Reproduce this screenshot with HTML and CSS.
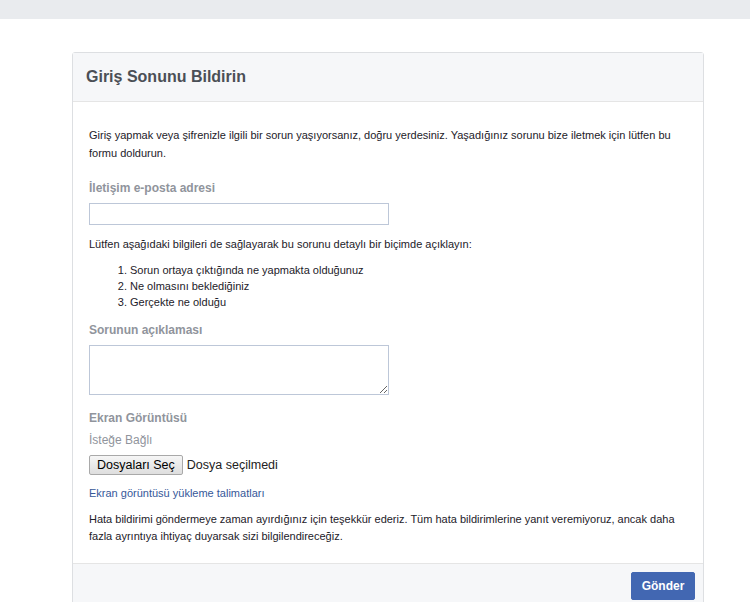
FILE: index.html
```html
<!DOCTYPE html>
<html lang="tr">
<head>
<meta charset="utf-8">
<title>Giriş Sonunu Bildirin</title>
<link rel="stylesheet" href="styles.css">
</head>
<body>
<div class="topbar"></div>
<div class="page">
  <form class="card">
    <div class="card-header">
      <h2 class="title">Giriş Sonunu Bildirin</h2>
    </div>
    <div class="card-body">
      <p class="intro">Giriş yapmak veya şifrenizle ilgili bir sorun yaşıyorsanız, doğru yerdesiniz. Yaşadığınız sorunu bize iletmek için lütfen bu formu doldurun.</p>
      <div class="label lbl-email">İletişim e-posta adresi</div>
      <input class="field" type="text">
      <p class="hint">Lütfen aşağıdaki bilgileri de sağlayarak bu sorunu detaylı bir biçimde açıklayın:</p>
      <ol class="steps">
        <li>Sorun ortaya çıktığında ne yapmakta olduğunuz</li>
        <li>Ne olmasını beklediğiniz</li>
        <li>Gerçekte ne olduğu</li>
      </ol>
      <div class="label">Sorunun açıklaması</div>
      <textarea class="area"></textarea>
      <div class="label lbl-shot">Ekran Görüntüsü</div>
      <div class="optional">İsteğe Bağlı</div>
      <div class="file-row">
        <span class="file-btn">Dosyaları Seç</span>
        <span class="file-text">Dosya seçilmedi</span>
      </div>
      <a class="link" href="#">Ekran görüntüsü yükleme talimatları</a>
      <p class="thanks">Hata bildirimi göndermeye zaman ayırdığınız için teşekkür ederiz. Tüm hata bildirimlerine yanıt veremiyoruz, ancak daha fazla ayrıntıya ihtiyaç duyarsak sizi bilgilendireceğiz.</p>
    </div>
    <div class="card-footer">
      <button class="submit" type="button">Gönder</button>
    </div>
  </form>
</div>
</body>
</html>
```

FILE: styles.css
```css
* { box-sizing: border-box; }
html, body { margin: 0; padding: 0; background: #fff; }
body {
  font-family: "Liberation Sans", Arial, sans-serif;
  font-size: 11px;
  color: #1d2129;
  overflow: hidden;
  height: 602px;
}
.topbar {
  height: 19px;
  background: #e9ebee;
}
.page {
  padding: 33px 0 0 72px;
}
.card {
  display: block;
  width: 632px;
  border: 1px solid #dddfe2;
  border-radius: 3px 3px 0 0;
  background: #fff;
}
.card-header {
  background: #f6f7f9;
  border-bottom: 1px solid #e5e5e5;
  height: 49px;
  padding: 0 13px;
  display: flex;
  align-items: center;
}
.title {
  margin: 0;
  font-size: 16px;
  font-weight: bold;
  color: #4b4f56;
  line-height: 20px;
}
.card-body {
  padding: 24px 16px 18px;
  display: flex;
  flex-direction: column;
  align-items: flex-start;
}
.intro {
  margin: 0;
  line-height: 18px;
  width: 100%;
}
.label {
  font-size: 12px;
  font-weight: bold;
  color: #90949c;
  line-height: 16px;
  margin-top: 12px;
}
.lbl-email { margin-top: 18px; }
.lbl-shot { margin-top: 15px; }
.field {
  margin-top: 7px;
  width: 300px;
  height: 22px;
  border: 1px solid #bdc7d8;
  padding: 3px;
  font: inherit;
  background: #fff;
}
.hint {
  margin: 11px 0 0;
  line-height: 16px;
}
.steps {
  margin: 10px 0 0;
  padding-left: 41px;
  line-height: 16px;
}
.area {
  margin-top: 7px;
  width: 300px;
  height: 50px;
  border: 1px solid #bdc7d8;
  font: inherit;
  resize: vertical;
  background: #fff;
}
.optional {
  margin-top: 6px;
  color: #90949c;
  font-size: 12px;
  line-height: 16px;
}
.file-row {
  margin-top: 7px;
  display: flex;
  align-items: center;
  gap: 4px;
}
.file-btn {
  display: inline-block;
  height: 20px;
  line-height: 18px;
  padding: 0 7px;
  border: 1px solid #a9a9a9;
  border-radius: 2px;
  background: linear-gradient(#f6f6f6, #dedede);
  font-size: 12.5px;
  color: #000;
}
.file-text {
  font-size: 12.5px;
  color: #222;
}
.link {
  margin-top: 10px;
  color: #365899;
  text-decoration: none;
  font-size: 11px;
  line-height: 16px;
}
.thanks {
  margin: 10px 0 0;
  line-height: 17px;
  width: 100%;
}
.card-footer {
  background: #f6f7f9;
  border-top: 1px solid #e5e5e5;
  padding: 8px 8px 12px;
  display: flex;
  justify-content: flex-end;
}
.submit {
  height: 28px;
  width: 64px;
  border: 1px solid #4267b2;
  border-radius: 2px;
  background: #4267b2;
  color: #fff;
  font: bold 12px "Liberation Sans", Arial, sans-serif;
  padding: 0;
}
```
